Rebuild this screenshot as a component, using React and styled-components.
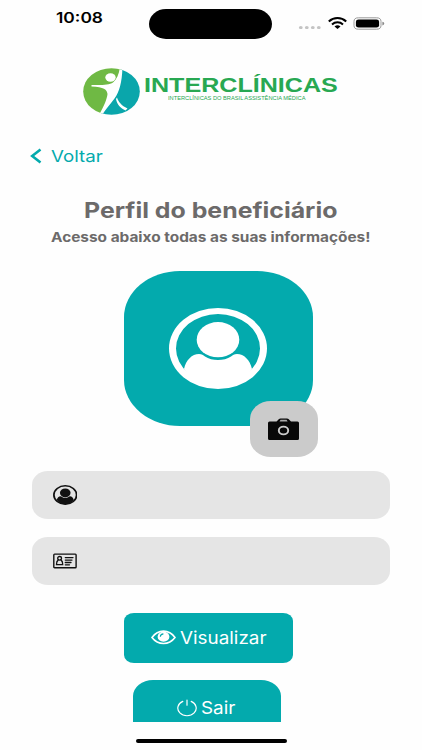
import React from "react";
import styled, { createGlobalStyle } from "styled-components";

const TEAL = "#03aaad";

const GlobalStyle = createGlobalStyle`
  *, *::before, *::after { box-sizing: border-box; }
  body { margin: 0; background: #fff; }
  svg { display: block; flex: none; }
`;

const Screen = styled.div`
  width: 422px;
  height: 750px;
  overflow: hidden;
  background: #fefefe;
  display: flex;
  flex-direction: column;
  font-family: Inter, "Liberation Sans", sans-serif;
`;

const Wide = styled.span`
  display: block;
  flex: none;
  width: ${(p) => p.$width}px;
  height: ${(p) => p.$line}px;
  line-height: ${(p) => p.$line}px;
  font-size: ${(p) => p.$size}px;
  font-weight: ${(p) => p.$weight || 400};
  font-family: ${(p) => p.$family || "inherit"};
  color: ${(p) => p.$color || "#000"};
  text-align: left;
  white-space: nowrap;
  transform: scaleX(${(p) => p.$stretch});
  transform-origin: left center;
`;

const StatusBar = styled.header`
  display: flex;
  align-items: flex-start;
  height: 67px;
  padding: 9px 0 0 56px;
`;

const Island = styled.div`
  width: 123px;
  height: 30px;
  margin-left: 46px;
  border-radius: 17px / 15px;
  background: #000;
`;

const StatusIcons = styled.div`
  display: flex;
  gap: 6.5px;
  margin: 8px 0 0 26px;
`;

const Brand = styled.div`
  display: flex;
  height: 49px;
  padding-left: 83px;
`;

const BrandText = styled.div`
  display: flex;
  flex-direction: column;
  padding: 6px 0 0 4px;
`;

const Tagline = styled.div`
  padding-left: 24px;
`;

const Back = styled.button`
  display: flex;
  align-items: center;
  gap: 9px;
  height: 20px;
  margin: 30px 0 0 30px;
  padding: 0;
  border: 0;
  background: none;
  font-family: inherit;
`;

const Heading = styled.div`
  display: flex;
  flex-direction: column;
  gap: 4px;
  padding: 31px 0 0 51px;
`;

const Title = styled.div`
  padding-left: 32.5px;
`;

const Avatar = styled.div`
  position: relative;
  display: flex;
  align-items: center;
  justify-content: center;
  width: 188.5px;
  height: 155px;
  margin: 24.8px 0 0 124px;
  padding-right: 1px;
  border-radius: 56px / 46px;
  background: ${TEAL};
`;

const CameraButton = styled.button`
  position: absolute;
  left: 126px;
  top: 130px;
  width: 68px;
  height: 56px;
  padding: 0 1.5px 0 0;
  border: 0;
  border-radius: 21px / 18px;
  background: #cbcbcb;
  display: flex;
  align-items: center;
  justify-content: center;
`;

const Fields = styled.div`
  display: flex;
  flex-direction: column;
  gap: 17.5px;
  margin: 45px 32px 0;
`;

const Field = styled.div`
  display: flex;
  align-items: center;
  height: 48.5px;
  padding-left: 20.7px;
  border-radius: 16px / 14px;
  background: #e5e5e5;
`;

const Action = styled.button`
  display: flex;
  align-items: center;
  flex: none;
  gap: 4.5px;
  width: 169px;
  height: 50px;
  margin: 27.5px 0 0 124px;
  padding: 0 0 0 26.5px;
  border: 0;
  border-radius: 10px / 8px;
  background: ${TEAL};
  font-family: inherit;
`;

const Exit = styled(Action)`
  width: 148px;
  height: 42px;
  margin: 17.5px 0 0 133px;
  padding: 13px 0 0 43.5px;
  border-radius: 20px 20px 0 0 / 16px 16px 0 0;
`;

const HomeIndicator = styled.div`
  flex: none;
  width: 151px;
  height: 4px;
  margin: 16.7px 0 0 135.5px;
  border-radius: 2px;
  background: #000;
`;

const Profile = ({ width, height, color }) => (
  <svg width={width} height={height} viewBox="0 0 98 81" preserveAspectRatio="none" fill={color}>
    <path fillRule="evenodd" d="M49 0a49 40.5 0 1 0 0 81a49 40.5 0 1 0 0-81ZM49 6a42 34.5 0 1 1 0 69a42 34.5 0 1 1 0-69Z" />
    <ellipse cx="49" cy="31.700" rx="21.300" ry="17.600" />
    <path d="M15 61C17 52 23 46 30 46C33 46 34 47 36 48.500C43 53.300 55 53.300 62 48.500C64 47 65 46 68 46C75 46 81 52 83 61C76 72 63 78 49 78C35 78 22 72 15 61Z" />
  </svg>
);

const Logo = () => (
  <svg width="57" height="48" viewBox="0 0 57 48">
    <defs><clipPath id="mark"><ellipse cx="28.500" cy="24.500" rx="28.300" ry="23.300" /></clipPath></defs>
    <g clipPath="url(#mark)">
      <path fill="#6fb944" d="M0 0H40L32 26L18 48H0Z" />
      <path fill="#0aa6ab" d="M38 0H57V48H17C27 38 34 24 38 0Z" />
      <path fill="#fff" d="M37 0H39.500C39 15 36.500 25 31.500 31.500C28 36 23 42 19 48L16.500 47C21 39 24 32 24.500 27C24 22.500 21 20 8.500 19.500V18C17 18 26 18.500 30 15.500C34 12 36 7 37 0Z" />
      <path fill="#fff" d="M34 30.500C35.500 35 38.500 38.500 44.500 41.500L42.500 43.500C37.500 41 34 37.500 33 32Z" />
    </g>
    <ellipse cx="27.500" cy="10.500" rx="5.200" ry="4.200" fill="#fff" />
  </svg>
);

const Dots = () => (
  <svg width="23" height="12" viewBox="0 0 23 12" fill="#c4c4c4">
    {[2.8, 8.8, 14.8, 20.8].map((x) => <ellipse key={x} cx={x} cy="10.600" rx="1.900" ry="1.600" />)}
  </svg>
);

const Wifi = () => (
  <svg width="19" height="13" viewBox="0 0 19 13" fill="none" stroke="#000">
    <path strokeWidth="2.100" d="M.8 4.500C5.800-.1 13.200-.1 18.200 4.500" />
    <path strokeWidth="2" d="M4 7.500C7.200 4.600 11.800 4.600 15 7.500" />
    <path fill="#000" stroke="none" d="M6.500 9.400Q9.500 7.300 12.500 9.400L9.500 12Z" />
  </svg>
);

const Battery = () => (
  <svg width="32" height="13" viewBox="0 0 32 13">
    <rect x="1" y=".8" width="27" height="11.400" rx="4.300" ry="3.600" fill="none" stroke="#999" />
    <rect x="2.900" y="2.500" width="23.200" height="8" rx="2.600" ry="2.200" />
    <path d="M29.400 4.700Q31.200 5 31.200 6.500T29.400 8.400Z" fill="#888" />
  </svg>
);

const Camera = () => (
  <svg width="31" height="22" viewBox="0 0 31 22">
    <path fill="#080808" d="M1.500 3.500H8.500L11 1Q11.500.4 12.500.4H19Q20 .4 20.500 1L23 3.500H29.500Q31 3.500 31 5V20.500Q31 22 29.500 22H1.500Q0 22 0 20.500V5Q0 3.500 1.500 3.500Z" />
    <path fill="#aaa" d="M12.500 1.800H18.600L19.600 3.500H11.500Z" />
    <ellipse cx="15.500" cy="12.500" rx="4.700" ry="3.900" fill="none" stroke="#cbcbcb" strokeWidth="1.900" />
  </svg>
);

const IdCard = () => (
  <svg width="24" height="16" viewBox="0 0 24 16" fill="none" stroke="#111" strokeLinecap="round">
    <rect x=".8" y="1.100" width="22.300" height="13.600" rx=".8" strokeWidth="1.400" />
    <ellipse cx="6.600" cy="5.300" rx="1.900" ry="1.800" strokeWidth="1.300" />
    <path strokeWidth="1.300" d="M5.100 7.100C3.700 8 3.500 9.200 3.500 11.600H9.700C9.700 9.200 9.500 8 8.100 7.100M12.300 4.600H20M12.300 7.100H19M12.300 9.500H18M12.300 11.800H16.500" />
  </svg>
);

const Eye = () => (
  <svg width="25" height="15" viewBox="0 0 25 15" fill="none" stroke="#fff">
    <path strokeWidth="1.600" d="M1 7.500C7-1 18-1 24 7.500C18 15.500 7 15.500 1 7.500Z" />
    <ellipse cx="12.500" cy="6.800" rx="5.900" ry="5" fill="#fff" stroke="none" />
    <path stroke={TEAL} strokeWidth="1.100" d="M9.300 6.800Q9.400 4.200 12.400 3.900" />
  </svg>
);

const Power = () => (
  <svg width="20" height="18" viewBox="0 0 20 18" fill="none" stroke="#fff" strokeWidth="1.200" strokeLinecap="round">
    <path d="M5.800 2.400A9.200 7.600 0 1 0 14.200 2.400M10 1V6.200" />
  </svg>
);

export default function App() {
  return (
    <>
      <GlobalStyle />
      <Screen>
        <StatusBar>
          <Wide $width={47} $line={18} $size={14.5} $weight={600} $stretch={1.2}>10:08</Wide>
          <Island />
          <StatusIcons>
            <Dots />
            <Wifi />
            <Battery />
          </StatusIcons>
        </StatusBar>
        <Brand>
          <Logo />
          <BrandText>
            <Wide $width={195} $line={24} $size={21} $weight={700} $family={'"Liberation Sans", sans-serif'} $color="#28a852" $stretch={1.195}>INTERCLÍNICAS</Wide>
            <Tagline>
              <Wide $width={140} $line={3} $size={5.3} $family={'"Liberation Sans", sans-serif'} $color="#28a852" $stretch={1.075}>INTERCLÍNICAS DO BRASIL ASSISTÊNCIA MÉDICA</Wide>
            </Tagline>
          </BrandText>
        </Brand>
        <Back>
          <svg width="12" height="16" viewBox="0 0 12 16" fill="none" stroke={TEAL} strokeWidth="2.600"><path d="M10.500 1.500L2.200 8L10.500 14.500" /></svg>
          <Wide $width={52} $line={20} $size={16.5} $color={TEAL} $stretch={1.135}>Voltar</Wide>
        </Back>
        <Heading>
          <Title>
            <Wide $width={255} $line={27} $size={21.5} $weight={700} $color="#6c6a6a" $stretch={1.157}>Perfil do beneficiário</Wide>
          </Title>
          <Wide $width={320} $line={18} $size={13.3} $weight={700} $color="#6c6a6a" $stretch={1.157}>Acesso abaixo todas as suas informações!</Wide>
        </Heading>
        <Avatar>
          <Profile width={98} height={81} color="#fff" />
          <CameraButton><Camera /></CameraButton>
        </Avatar>
        <Fields>
          <Field><Profile width={24.5} height={20} color="#111" /></Field>
          <Field><IdCard /></Field>
        </Fields>
        <Action>
          <Eye />
          <Wide $width={86} $line={22} $size={17} $color="#fff" $stretch={1.11}>Visualizar</Wide>
        </Action>
        <Exit>
          <Power />
          <Wide $width={34} $line={22} $size={17} $color="#fff" $stretch={1.11}>Sair</Wide>
        </Exit>
        <HomeIndicator />
      </Screen>
    </>
  );
}
